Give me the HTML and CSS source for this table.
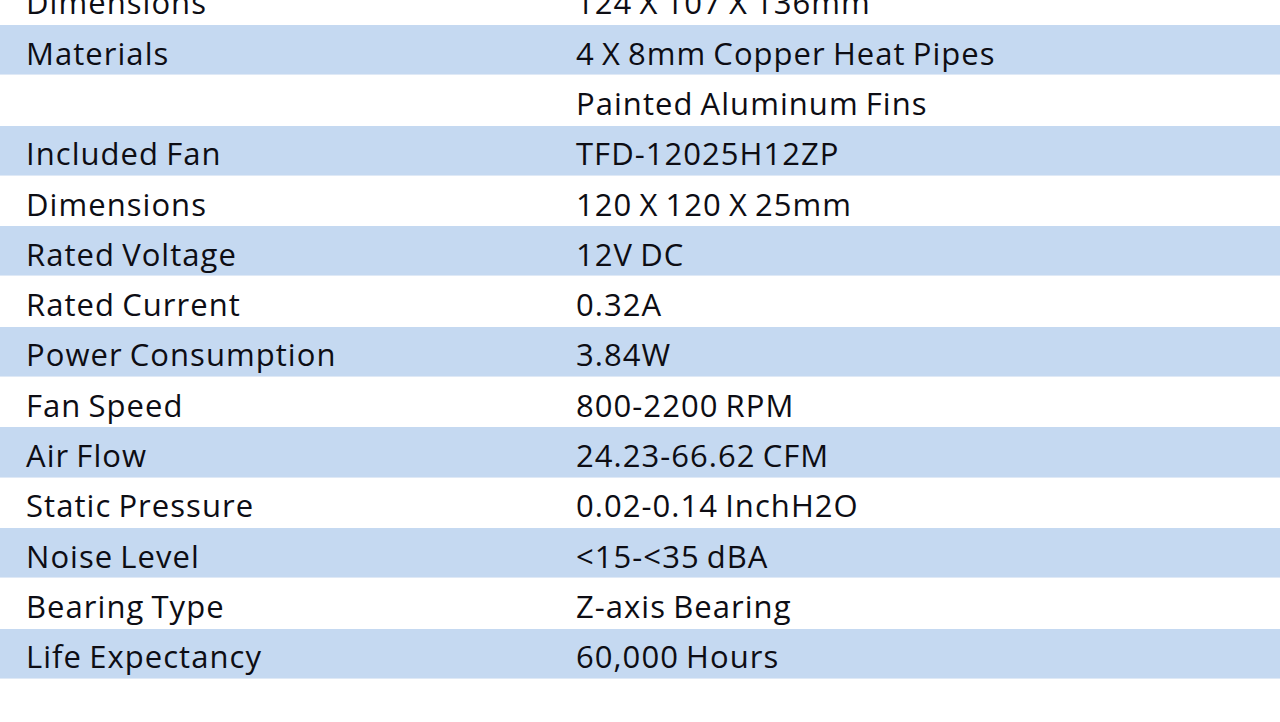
FILE: index.html
```html
<!DOCTYPE html>
<html>
<head>
<meta charset="utf-8">
<link rel="stylesheet" href="styles.css">
</head>
<body>
<div class="viewport">
  <div class="spec">
    <div class="row"><div class="k">Dimensions</div><div class="v">124 X 107 X 136mm</div></div>
    <div class="row alt"><div class="k">Materials</div><div class="v">4 X 8mm Copper Heat Pipes</div></div>
    <div class="row"><div class="k"></div><div class="v">Painted Aluminum Fins</div></div>
    <div class="row alt"><div class="k">Included Fan</div><div class="v">TFD-12025H12ZP</div></div>
    <div class="row"><div class="k">Dimensions</div><div class="v">120 X 120 X 25mm</div></div>
    <div class="row alt"><div class="k">Rated Voltage</div><div class="v">12V DC</div></div>
    <div class="row"><div class="k">Rated Current</div><div class="v">0.32A</div></div>
    <div class="row alt"><div class="k">Power Consumption</div><div class="v">3.84W</div></div>
    <div class="row"><div class="k">Fan Speed</div><div class="v">800-2200 RPM</div></div>
    <div class="row alt"><div class="k">Air Flow</div><div class="v">24.23-66.62 CFM</div></div>
    <div class="row"><div class="k">Static Pressure</div><div class="v">0.02-0.14 InchH2O</div></div>
    <div class="row alt"><div class="k">Noise Level</div><div class="v">&lt;15-&lt;35 dBA</div></div>
    <div class="row"><div class="k">Bearing Type</div><div class="v">Z-axis Bearing</div></div>
    <div class="row alt"><div class="k">Life Expectancy</div><div class="v">60,000 Hours</div></div>
  </div>
</div>
</body>
</html>
```
FILE: styles.css
```css
html, body {
  margin: 0;
  padding: 0;
  background: #ffffff;
}
.viewport {
  width: 1280px;
  height: 722px;
  overflow: hidden;
}
.spec {
  margin-top: -25.3px;
  display: flex;
  flex-direction: column;
  font-family: "Open Sans", "Noto Sans", sans-serif;
  font-size: 31px;
  font-weight: 500;
  letter-spacing: 1.05px;
  word-spacing: -2px;
  color: #0d0d14;
}
.row {
  height: 50.3px;
  display: grid;
  grid-template-columns: 550px 1fr;
  padding-left: 26px;
  align-items: center;
  line-height: 1;
  box-sizing: border-box;
}
.row .k, .row .v {
  padding-top: 6px;
  white-space: nowrap;
}
.row.alt {
  background: #c5d9f1;
  box-shadow: inset 0 -1px 0 #dfe9f6;
}
```
